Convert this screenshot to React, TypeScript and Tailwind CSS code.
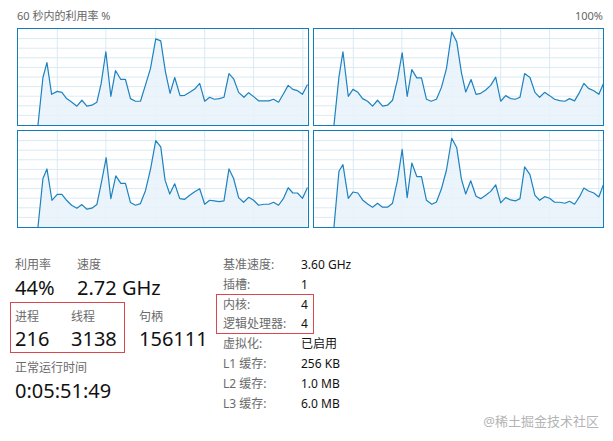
import React from "react";

type Pt = [number, number];

// points read off the screenshot at 3x, relative to each graph's box (870 x 291)
const raw = {
  topLeft: {
    ox: 52,
    oy: 85,
    pts: [
      [112, 376], [127, 232], [139, 187], [153, 283], [170, 274], [184, 277], [198, 296], [214, 307],
      [229, 319], [244, 301], [259, 319], [274, 316], [289, 307], [302, 250], [316, 154], [331, 289],
      [345, 211], [361, 238], [375, 238], [390, 296], [405, 304], [420, 304], [435, 255], [450, 205],
      [466, 115], [481, 121], [495, 214], [509, 280], [523, 232], [539, 287], [553, 286], [568, 277],
      [583, 267], [598, 250], [613, 304], [628, 292], [642, 298], [657, 296], [671, 292], [686, 220],
      [700, 236], [715, 277], [731, 292], [745, 278], [760, 290], [776, 303], [791, 303], [806, 303],
      [820, 298], [835, 307], [849, 283], [864, 256], [878, 268], [892, 272], [907, 283], [922, 253],
    ] as Pt[],
  },
  topRight: {
    ox: 37,
    oy: 85,
    pts: [
      [97, 376], [112, 230], [124, 154], [140, 289], [154, 268], [169, 277], [183, 296], [198, 304],
      [213, 319], [228, 301], [243, 319], [258, 316], [273, 301], [288, 238], [302, 157], [317, 289],
      [331, 208], [346, 233], [360, 233], [375, 298], [389, 304], [405, 298], [420, 262], [435, 205],
      [451, 94], [466, 124], [480, 217], [493, 276], [509, 238], [524, 283], [538, 280], [553, 270],
      [568, 256], [583, 231], [598, 304], [613, 287], [628, 296], [642, 298], [656, 292], [670, 220],
      [686, 232], [701, 277], [715, 292], [730, 277], [745, 287], [760, 298], [775, 302], [791, 304],
      [805, 296], [820, 303], [835, 277], [848, 250], [862, 265], [878, 272], [893, 283], [907, 250],
    ] as Pt[],
  },
  bottomLeft: {
    ox: 52,
    oy: 31,
    pts: [
      [112, 322], [127, 175], [139, 146], [154, 241], [170, 223], [184, 223], [198, 241], [213, 256],
      [229, 265], [244, 254], [259, 268], [274, 265], [289, 254], [303, 185], [317, 112], [331, 236],
      [346, 167], [361, 190], [375, 190], [390, 248], [405, 256], [420, 251], [435, 212], [450, 148],
      [466, 60], [481, 79], [494, 180], [508, 222], [523, 191], [538, 236], [553, 238], [568, 226],
      [583, 215], [598, 206], [613, 253], [628, 241], [642, 243], [656, 245], [671, 243], [686, 146],
      [700, 175], [715, 233], [730, 247], [745, 232], [760, 241], [775, 256], [791, 253], [806, 253],
      [820, 247], [835, 256], [850, 235], [864, 203], [878, 219], [892, 219], [907, 235], [922, 202],
    ] as Pt[],
  },
  bottomRight: {
    ox: 37,
    oy: 31,
    pts: [
      [97, 322], [112, 153], [124, 133], [140, 235], [154, 216], [169, 219], [183, 240], [198, 252],
      [213, 262], [228, 250], [243, 262], [258, 262], [273, 250], [288, 180], [302, 87], [317, 233],
      [331, 128], [346, 169], [360, 169], [375, 241], [391, 253], [405, 246], [420, 206], [435, 150],
      [451, 53], [466, 82], [480, 177], [493, 222], [508, 182], [524, 229], [538, 236], [553, 226],
      [568, 214], [583, 194], [598, 249], [613, 233], [628, 240], [642, 243], [656, 236], [670, 140],
      [686, 163], [701, 226], [715, 241], [730, 230], [745, 235], [760, 247], [775, 247], [791, 250],
      [805, 244], [820, 253], [835, 230], [848, 204], [862, 213], [878, 219], [893, 231], [907, 193],
    ] as Pt[],
  },
};

const vLines = [118, 264, 414, 561, 708, 856];

function Graph({ data }: { data: { ox: number; oy: number; pts: Pt[] } }) {
  const pts = data.pts.map(([x, y]) => [x - data.ox, y - data.oy] as Pt);
  const line = pts.map(([x, y]) => `${x},${y}`).join(" ");
  const first = pts[0];
  const last = pts[pts.length - 1];
  const area = `${first[0]},291 ${line} ${last[0]},291`;

  return (
    <div className="h-[98px] border border-[#117dbb] bg-white">
      <svg viewBox="0 0 870 291" preserveAspectRatio="none" className="block w-full h-full">
        {Array.from({ length: 9 }, (_, i) => (
          <line
            key={"h" + i}
            x1={0}
            x2={870}
            y1={(i + 1) * 29.1}
            y2={(i + 1) * 29.1}
            stroke="#d9eaf4"
            strokeWidth={1}
            vectorEffect="non-scaling-stroke"
          />
        ))}
        {vLines.map((x) => (
          <line
            key={"v" + x}
            x1={x}
            x2={x}
            y1={0}
            y2={291}
            stroke="#d9eaf4"
            strokeWidth={1}
            vectorEffect="non-scaling-stroke"
          />
        ))}
        <polygon points={area} fill="#e8f2fa" fillOpacity={0.85} />
        <polyline
          points={line}
          fill="none"
          stroke="#1d82bf"
          strokeWidth={1.2}
          strokeLinejoin="round"
          vectorEffect="non-scaling-stroke"
        />
      </svg>
    </div>
  );
}

const details = [
  { label: "基准速度:", value: "3.60 GHz" },
  { label: "插槽:", value: "1" },
];

const details2 = [
  { label: "虚拟化:", value: "已启用" },
  { label: "L1 缓存:", value: "256 KB" },
  { label: "L2 缓存:", value: "1.0 MB" },
  { label: "L3 缓存:", value: "6.0 MB" },
];

function DetailRow({ label, value, tight }: { label: string; value: string; tight?: boolean }) {
  return (
    <div className={`flex ${tight ? "leading-[19px]" : "leading-[20px]"} text-[12px]`}>
      <div className="w-[78px] text-[#6b6b6b]">{label}</div>
      <div className="text-[#111]">{value}</div>
    </div>
  );
}

export default function App() {
  return (
    <div
      className="relative w-[613px] h-[441px] overflow-hidden bg-white"
      style={{ fontFamily: '"Noto Sans", "Noto Sans CJK SC", sans-serif' }}
    >
      <div className="flex justify-between h-[28px] pt-[9px] pl-[17px] pr-[10px] text-[11px] leading-[14px] text-[#666]">
        <span>60 秒内的利用率 %</span>
        <span>100%</span>
      </div>

      <div className="ml-[17px] w-[587px] grid grid-cols-2 gap-[4px]">
        <Graph data={raw.topLeft} />
        <Graph data={raw.topRight} />
        <Graph data={raw.bottomLeft} />
        <Graph data={raw.bottomRight} />
      </div>

      <div className="flex pt-[27px]">
        {/* left block: big numbers */}
        <div className="ml-[10px] w-[206px]">
          <div className="flex pl-[5px]">
            <div className="w-[62px]">
              <div className="text-[12px] leading-[20px] text-[#6b6b6b]">利用率</div>
              <div className="text-[20px] leading-[26px] text-[#111]">44%</div>
            </div>
            <div>
              <div className="text-[12px] leading-[20px] text-[#6b6b6b]">速度</div>
              <div className="text-[20px] leading-[26px] text-[#111]">2.72 GHz</div>
            </div>
          </div>

          <div className="flex mt-[1px]">
            <div className="flex w-[115px] border border-[#d9484f] pl-[4px] pt-[4px]">
              <div className="w-[56px]">
                <div className="text-[12px] leading-[19px] text-[#6b6b6b]">进程</div>
                <div className="text-[20px] leading-[26px] text-[#111]">216</div>
              </div>
              <div>
                <div className="text-[12px] leading-[19px] text-[#6b6b6b]">线程</div>
                <div className="text-[20px] leading-[26px] text-[#111]">3138</div>
              </div>
            </div>
            <div className="ml-[14px] pt-[5px]">
              <div className="text-[12px] leading-[19px] text-[#6b6b6b]">句柄</div>
              <div className="text-[20px] leading-[26px] text-[#111]">156111</div>
            </div>
          </div>

          <div className="pl-[5px] mt-[5px]">
            <div className="text-[12px] leading-[20px] text-[#6b6b6b]">正常运行时间</div>
            <div className="text-[20px] leading-[26px] text-[#111]">0:05:51:49</div>
          </div>
        </div>

        {/* right block: details table */}
        <div>
          <div className="pl-[7px]">
            {details.map((d) => (
              <DetailRow key={d.label} label={d.label} value={d.value} />
            ))}
          </div>
          <div className="w-[98px] -mt-[1px] border border-[#d9484f] pl-[6px]">
            <DetailRow label="内核:" value="4" tight />
            <DetailRow label="逻辑处理器:" value="4" tight />
          </div>
          <div className="pl-[7px]">
            {details2.map((d) => (
              <DetailRow key={d.label} label={d.label} value={d.value} />
            ))}
          </div>
        </div>
      </div>

      <div className="absolute right-[14px] top-[412px] text-[13px] leading-[18px] text-[#b4b4b4]">
        @稀土掘金技术社区
      </div>
    </div>
  );
}
